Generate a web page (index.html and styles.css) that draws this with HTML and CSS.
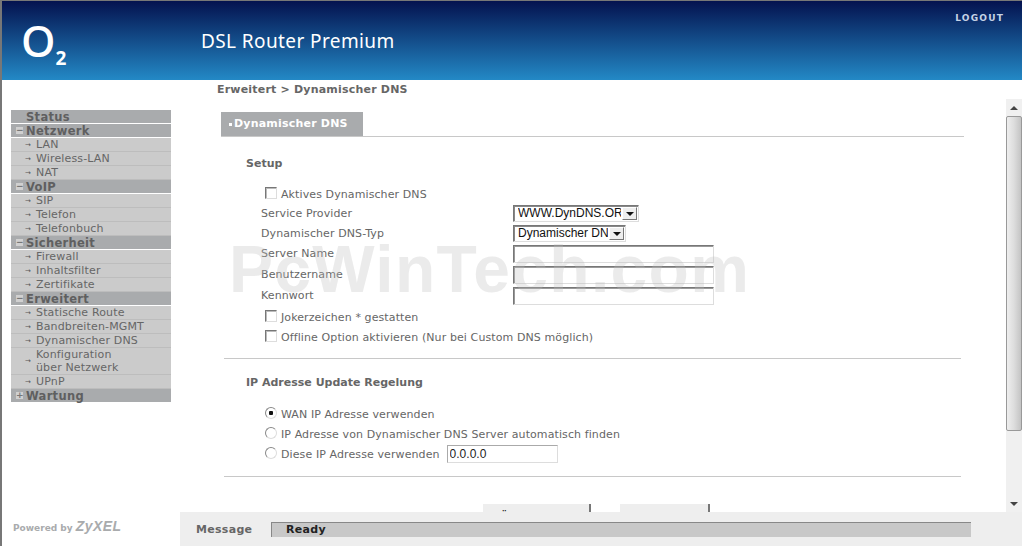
FILE: index.html
```html
<!DOCTYPE html>
<html lang="en">
<head>
    <meta charset="UTF-8">
    <title>DSL Router Premium</title>
    <link rel="stylesheet" href="styles.css">
</head>
<body>
    <div class="page">
        <div class="header">
            <div class="logo">O<span class="logo-two">2</span></div>
            <div class="product">DSL Router Premium</div>
            <a class="logout" href="#">LOGOUT</a>
        </div>

        <div class="middle">
            <div class="sidebar">
                <div class="menu">
                    <div class="menu-head menu-first"><span class="toggle toggle-none"></span>Status</div>
                    <div class="menu-head"><span class="toggle">&minus;</span>Netzwerk</div>
                    <a class="menu-item" href="#">LAN</a>
                    <a class="menu-item" href="#">Wireless-LAN</a>
                    <a class="menu-item" href="#">NAT</a>
                    <div class="menu-head"><span class="toggle">&minus;</span>VoIP</div>
                    <a class="menu-item" href="#">SIP</a>
                    <a class="menu-item" href="#">Telefon</a>
                    <a class="menu-item" href="#">Telefonbuch</a>
                    <div class="menu-head"><span class="toggle">&minus;</span>Sicherheit</div>
                    <a class="menu-item" href="#">Firewall</a>
                    <a class="menu-item" href="#">Inhaltsfilter</a>
                    <a class="menu-item" href="#">Zertifikate</a>
                    <div class="menu-head"><span class="toggle">&minus;</span>Erweitert</div>
                    <a class="menu-item" href="#">Statische Route</a>
                    <a class="menu-item" href="#">Bandbreiten-MGMT</a>
                    <a class="menu-item" href="#">Dynamischer DNS</a>
                    <a class="menu-item menu-item-tall" href="#">Konfiguration<br>über Netzwerk</a>
                    <a class="menu-item" href="#">UPnP</a>
                    <div class="menu-head"><span class="toggle">+</span>Wartung</div>
                </div>
                <div class="powered">Powered by <span class="zyxel">ZyXEL</span></div>
            </div>

            <div class="content">
                <div class="crumb">Erweitert &gt; Dynamischer DNS</div>
                <div class="pane">
                    <div class="pane-body">
                        <div class="tab-line"><div class="tab"><span class="tab-dot"></span>Dynamischer DNS</div></div>

                        <div class="section-title title-setup">Setup</div>
                        <label class="check-row row-aktiv"><input type="checkbox">Aktives Dynamischer DNS</label>
                        <div class="field-row row-provider">
                            <span class="field-label">Service Provider</span>
                            <span class="select-box">
                                <select class="pick pick-wide"><option>WWW.DynDNS.ORG</option></select>
                                <span class="drop-btn"></span>
                            </span>
                        </div>
                        <div class="field-row row-typ">
                            <span class="field-label">Dynamischer DNS-Typ</span>
                            <span class="select-box">
                                <select class="pick pick-narrow"><option>Dynamischer DNS</option></select>
                                <span class="drop-btn"></span>
                            </span>
                        </div>
                        <div class="field-row row-text">
                            <span class="field-label">Server Name</span>
                            <input class="text-box" type="text">
                        </div>
                        <div class="field-row row-text">
                            <span class="field-label">Benutzername</span>
                            <input class="text-box" type="text">
                        </div>
                        <div class="field-row row-text">
                            <span class="field-label">Kennwort</span>
                            <input class="text-box" type="password">
                        </div>
                        <label class="check-row row-joker"><input type="checkbox">Jokerzeichen * gestatten</label>
                        <label class="check-row row-offline"><input type="checkbox">Offline Option aktivieren (Nur bei Custom DNS möglich)</label>
                        <div class="rule rule-one"></div>

                        <div class="section-title title-ip">IP Adresse Update Regelung</div>
                        <label class="check-row row-wan"><input type="radio" name="ipmode" checked>WAN IP Adresse verwenden</label>
                        <label class="check-row row-radio"><input type="radio" name="ipmode">IP Adresse von Dynamischer DNS Server automatisch finden</label>
                        <label class="check-row row-radio"><input type="radio" name="ipmode">Diese IP Adresse verwenden<input class="text-box ip-box" type="text" value="0.0.0.0"></label>
                        <div class="rule rule-two"></div>

                        <div class="buttons">
                            <button class="btn btn-apply">Übernehmen</button>
                            <button class="btn btn-cancel">Abbrechen</button>
                        </div>
                    </div>
                    <div class="scrollbar">
                        <div class="scroll-btn"><span class="arrow-up"></span></div>
                        <div class="scroll-thumb"></div>
                        <div class="scroll-track"></div>
                        <div class="scroll-btn"><span class="arrow-down"></span></div>
                    </div>
                </div>
                <div class="message-bar">
                    <span class="message-label">Message</span>
                    <div class="message-box">Ready</div>
                </div>
            </div>
        </div>
        <div class="watermark">PcWinTech.com</div>
    </div>
</body>
</html>
```

FILE: styles.css
```css
html, body {
    margin: 0;
    padding: 0;
}
body {
    font-family: "DejaVu Sans", Verdana, sans-serif;
    font-size: 11px;
    color: #666;
    background-color: white;
}
a {
    text-decoration: none;
    color: inherit;
}
.page {
    position: relative;
    width: 1022px;
    height: 546px;
    box-sizing: border-box;
    border-left: 2px solid #777;
    overflow: hidden;
    display: flex;
    flex-direction: column;
}

/* header */
.header {
    height: 80px;
    flex: none;
    box-sizing: border-box;
    border-top: 1px solid #777;
    background: linear-gradient(#04124f, #2389c6);
    display: flex;
    align-items: flex-start;
    color: white;
}
.logo {
    width: 199px;
    padding: 9px 0 0 19px;
    box-sizing: border-box;
    font-family: "Noto Sans", sans-serif;
    font-size: 44px;
    line-height: 60px;
    font-weight: 500;
}
.logo-two {
    font-size: 19px;
    font-weight: 700;
    line-height: 19px;
    vertical-align: -8px;
}
.product {
    font-family: "Noto Sans", sans-serif;
    font-size: 19px;
    line-height: 26px;
    margin-top: 27px;
    letter-spacing: 0.4px;
}
.logout {
    margin-left: auto;
    margin-right: 18px;
    margin-top: 11px;
    font-size: 9px;
    line-height: 12px;
    font-weight: bold;
    letter-spacing: 1.2px;
    color: #c6d3e6;
}

/* left menu */
.middle {
    flex: 1;
    display: flex;
    min-height: 0;
}
.sidebar {
    width: 178px;
    flex: none;
    padding: 30px 0 0 9px;
    box-sizing: border-box;
    display: flex;
    flex-direction: column;
}
.menu {
    width: 160px;
}
.menu-head {
    height: 13px;
    margin-bottom: 1px;
    background-color: #a9abad;
    color: #5f5f60;
    font-size: 11.5px;
    font-weight: bold;
    line-height: 14px;
    display: flex;
    align-items: center;
    letter-spacing: 0.3px;
}
.toggle {
    width: 7px;
    height: 7px;
    margin: 0 3px 0 5px;
    background-color: #d0d0d0;
    color: #777;
    font-size: 9px;
    line-height: 7px;
    text-align: center;
    flex: none;
}
.toggle-none {
    background: none;
}
.menu-item {
    display: block;
    height: 13px;
    padding-left: 25px;
    background-color: #cbcbcb;
    border-bottom: 1px solid #bdbdbd;
    line-height: 14px;
    position: relative;
    letter-spacing: 0.15px;
}
.menu-item::before {
    content: "→";
    position: absolute;
    left: 14px;
    font-size: 7px;
    color: #555;
}
.menu-item-tall {
    height: 26px;
    line-height: 13px;
}
.menu-item-tall::before {
    top: 7px;
}
.powered {
    margin-top: auto;
    margin-bottom: 11px;
    margin-left: 2px;
    font-size: 9px;
    font-weight: bold;
    color: #a9abad;
    line-height: 14px;
}
.zyxel {
    font-family: "Liberation Sans", sans-serif;
    font-size: 14px;
    font-style: italic;
    font-weight: bold;
    letter-spacing: 0.4px;
}

/* main column */
.content {
    flex: 1;
    display: flex;
    flex-direction: column;
    min-width: 0;
    min-height: 0;
}
.crumb {
    height: 19px;
    padding-left: 37px;
    padding-top: 3px;
    box-sizing: border-box;
    font-weight: bold;
    line-height: 14px;
    color: #666;
    letter-spacing: 0.2px;
    flex: none;
}
.pane {
    flex: 1;
    display: flex;
    min-height: 0;
}
.pane-body {
    flex: 1;
    padding: 13px 0 0 41px;
    overflow: hidden;
    min-width: 0;
}
.tab-line {
    width: 743px;
    border-bottom: 1px solid #c8c8c8;
}
.tab {
    width: 142px;
    height: 24px;
    background-color: #a9abad;
    color: white;
    font-weight: bold;
    line-height: 24px;
    display: flex;
    align-items: center;
    letter-spacing: 0.2px;
}
.tab-dot {
    width: 3px;
    height: 3px;
    margin: 0 2px 0 8px;
    background-color: white;
}
.section-title {
    font-weight: bold;
    color: #666;
    line-height: 14px;
    padding-left: 25px;
}
.title-setup {
    margin-top: 20px;
}
.title-ip {
    margin-top: 17px;
}
.check-row {
    display: flex;
    align-items: center;
    height: 20px;
    padding-left: 44px;
    letter-spacing: 0.1px;
}
.check-row input[type=checkbox],
.check-row input[type=radio] {
    appearance: none;
    width: 12px;
    height: 12px;
    margin: -3px 4px 0 0;
    box-sizing: border-box;
    background-color: white;
    flex: none;
}
.check-row input[type=checkbox] {
    border: 1px solid;
    border-color: #777 #ddd #ddd #777;
    box-shadow: inset 1px 1px 0 #bbb;
}
.check-row input[type=radio] {
    border: 1px solid;
    border-color: #888 #ddd #ddd #888;
    border-radius: 50%;
}
.check-row input[type=radio]:checked {
    background: radial-gradient(circle, #111 2px, white 2.5px);
}
.row-aktiv {
    margin-top: 14px;
    height: 18px;
}
.field-row {
    display: flex;
    align-items: center;
    padding-left: 40px;
    letter-spacing: 0.1px;
}
.field-label {
    width: 252px;
    flex: none;
}
.row-provider {
    height: 20px;
}
.row-typ {
    height: 20px;
}
.row-text {
    height: 21px;
}
.row-joker {
    margin-top: 1px;
}
.row-offline {
    height: 20px;
}
.select-box {
    display: inline-flex;
    align-items: center;
    height: 17px;
    box-sizing: border-box;
    border: 1px solid;
    border-color: #777 #ddd #ddd #777;
    box-shadow: inset 1px 1px 0 #888;
    padding: 1px 1px 1px 2px;
}
.pick {
    appearance: none;
    border: none;
    background: none;
    padding: 0 0 0 2px;
    height: 14px;
    font-family: "Liberation Sans", sans-serif;
    font-size: 12px;
    color: #111;
}
.pick-wide {
    width: 105px;
}
.pick-narrow {
    width: 92px;
}
.drop-btn {
    width: 15px;
    height: 13px;
    box-sizing: border-box;
    background-color: #eee;
    border: 1px solid;
    border-color: #fff #777 #777 #fff;
    position: relative;
    margin-left: 1px;
}
.drop-btn::after {
    content: "";
    position: absolute;
    left: 3px;
    top: 4px;
    border: 4px solid transparent;
    border-top-color: #111;
    border-bottom: none;
}
.text-box {
    width: 201px;
    height: 18px;
    box-sizing: border-box;
    border: 1px solid;
    border-color: #777 #ddd #ddd #777;
    box-shadow: inset 1px 1px 0 #999;
    background: white;
    font-family: "DejaVu Sans", sans-serif;
    font-size: 11px;
    padding: 0 2px;
    margin: 0;
    outline: none;
}
.ip-box {
    width: 111px;
    margin-left: 7px;
    color: #222;
    box-shadow: none;
    border-color: #aaa #ddd #ddd #aaa;
    font-family: "Liberation Sans", sans-serif;
    font-size: 12px;
}
.rule {
    width: 737px;
    margin-left: 3px;
    border-top: 1px solid #c8c8c8;
}
.rule-one {
    margin-top: 11px;
}
.row-wan {
    margin-top: 14px;
}
.rule-two {
    margin-top: 12px;
}
.buttons {
    margin-top: 27px;
    display: flex;
    padding-left: 262px;
}
.btn {
    height: 24px;
    border: none;
    border-right: 2px solid #777;
    background-color: #eee;
    font-family: "DejaVu Sans", sans-serif;
    font-size: 11px;
    color: #222;
    padding: 0;
    flex: none;
}
.btn-apply {
    width: 108px;
}
.btn-cancel {
    width: 90px;
    margin-left: 29px;
}

/* scrollbar */
.scrollbar {
    width: 16px;
    flex: none;
    background-color: #f0f0f0;
    display: flex;
    flex-direction: column;
}
.scroll-btn {
    height: 17px;
    flex: none;
    display: flex;
    align-items: center;
    justify-content: center;
}
.arrow-up {
    border: 4px solid transparent;
    border-bottom-color: #444;
    border-top: none;
}
.arrow-down {
    border: 4px solid transparent;
    border-top-color: #444;
    border-bottom: none;
}
.scroll-thumb {
    height: 315px;
    box-sizing: border-box;
    border: 1px solid #999;
    border-radius: 2px;
    background: linear-gradient(to right, #eee, #ddd 50%, #c4c4c4);
    flex: none;
}
.scroll-track {
    flex: 1;
}

/* message bar */
.message-bar {
    height: 34px;
    flex: none;
    background-color: #eee;
    display: flex;
    align-items: center;
    margin-left: 0;
    font-weight: bold;
}
.message-label {
    width: 75px;
    padding-left: 16px;
    color: #666;
    letter-spacing: 0.3px;
}
.message-box {
    width: 700px;
    height: 15px;
    box-sizing: border-box;
    background-color: #c8c8c8;
    border-top: 1px solid #888;
    border-left: 1px solid #888;
    color: #222;
    padding-left: 14px;
    line-height: 14px;
    letter-spacing: 0.3px;
}

/* light stamp lying over the form */
.watermark {
    position: absolute;
    left: 227px;
    top: 234px;
    font-family: "Liberation Sans", sans-serif;
    font-size: 66px;
    font-weight: bold;
    line-height: 70px;
    letter-spacing: 1.3px;
    color: rgba(190, 190, 190, 0.3);
    pointer-events: none;
}
```
